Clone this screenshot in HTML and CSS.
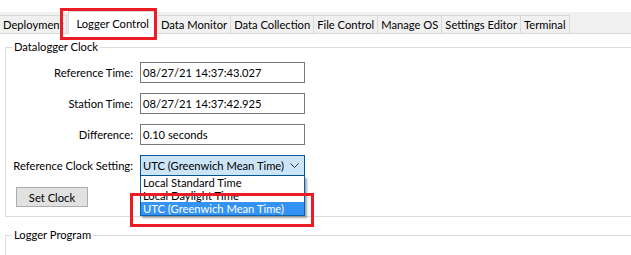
FILE: index.html
```html
<!DOCTYPE html>
<html lang="en">

<head>
    <meta charset="UTF-8">
    <title>Logger Control</title>
    <link rel="stylesheet" href="styles.css">
</head>

<body>

    <div class="top-space"></div>
    <div class="tab-bar">
        <div class="tab">Deployment</div>
        <div class="tab active">Logger Control</div>
        <div class="tab">Data Monitor</div>
        <div class="tab">Data Collection</div>
        <div class="tab">File Control</div>
        <div class="tab">Manage OS</div>
        <div class="tab">Settings Editor</div>
        <div class="tab">Terminal</div>
    </div>

    <div class="tab-page">
        <fieldset class="group clock-group">
            <legend>Datalogger Clock</legend>
            <div class="form-grid">
                <label>Reference Time:</label>
                <div class="text-box">08/27/21 14:37:43.027</div>

                <label>Station Time:</label>
                <div class="text-box">08/27/21 14:37:42.925</div>

                <label>Difference:</label>
                <div class="text-box">0.10 seconds</div>

                <label>Reference Clock Setting:</label>
                <div class="combo-wrap">
                    <div class="combo">
                        <span class="combo-text">UTC (Greenwich Mean Time)</span>
                        <svg class="chevron" width="9" height="5" viewBox="0 0 9 5">
                            <path d="M0.5 0.5 L4.5 4.5 L8.5 0.5" fill="none" stroke="#333" stroke-width="1" />
                        </svg>
                    </div>
                    <ul class="combo-list">
                        <li>Local Standard Time</li>
                        <li>Local Daylight Time</li>
                        <li class="selected">UTC (Greenwich Mean Time)</li>
                    </ul>
                </div>
            </div>
            <button class="set-btn">Set Clock</button>
        </fieldset>

        <fieldset class="group program-group">
            <legend>Logger Program</legend>
        </fieldset>
    </div>

    <!-- annotation boxes from the screenshot -->
    <div class="mark mark-tab"></div>
    <div class="mark mark-option"></div>

</body>

</html>
```

FILE: styles.css
```css
body {
    margin: 0;
    padding: 0;
    width: 631px;
    height: 255px;
    overflow: hidden;
    position: relative;
    background-color: #ffffff;
    color: #000000;
    font-family: Lato, "Liberation Sans", sans-serif;
    font-size: 11.2px;
}

.top-space {
    height: 12px;
}

.tab-bar {
    display: flex;
    align-items: flex-end;
    height: 22px;
    background-color: #f0f0f0;
    border-bottom: 1px solid #d9d9d9;
    box-sizing: border-box;
}

.tab {
    height: 18px;
    line-height: 18px;
    padding: 0 3px;
    border: 1px solid #d9d9d9;
    border-bottom: none;
    border-left: none;
    box-sizing: border-box;
    background-color: #f0f0f0;
    white-space: nowrap;
}

.tab:first-child {
    padding-left: 3px;
}

.tab.active {
    height: 23px;
    margin: 0 1px -1px 1px;
    padding: 0 7px;
    line-height: 23px;
    background-color: #ffffff;
    border-left: 1px solid #d9d9d9;
}

.tab-page {
    padding-top: 6px;
}

.group {
    margin: 0 -20px 0 5px;
    border: 1px solid #dcdcdc;
    padding: 0 6px;
}

.group legend {
    padding: 0 2px;
    line-height: 14px;
}

.clock-group {
    padding-top: 8px;
    padding-bottom: 9px;
}

.form-grid {
    display: grid;
    grid-template-columns: 121px 165px;
    column-gap: 7px;
    row-gap: 10px;
    align-items: center;
}

.form-grid label {
    text-align: right;
    white-space: nowrap;
}

.text-box {
    height: 21px;
    line-height: 19px;
    border: 1px solid #7a7a7a;
    box-sizing: border-box;
    padding-left: 2px;
    white-space: nowrap;
}

.combo-wrap {
    position: relative;
}

.combo {
    height: 21px;
    border: 1px solid #005499;
    box-sizing: border-box;
    background-color: #cce4f7;
    padding: 0 0 0 2px;
    display: flex;
    align-items: center;
    justify-content: space-between;
}

.combo-text {
    white-space: nowrap;
    overflow: hidden;
}

.chevron {
    flex-shrink: 0;
    margin-right: 5px;
}

.combo-list {
    position: absolute;
    top: 100%;
    left: 0;
    width: 100%;
    box-sizing: border-box;
    margin: 0;
    padding: 0;
    list-style: none;
    background-color: #ffffff;
    border: 1px solid #0063b1;
    border-top: none;
    box-shadow: 2px 2px 2px rgba(0, 0, 0, 0.35);
    z-index: 2;
}

.combo-list li {
    height: 13px;
    line-height: 13px;
    padding-left: 2px;
    white-space: nowrap;
}

.combo-list li.selected {
    background-color: #3393f5;
    color: #ffffff;
}

.set-btn {
    display: block;
    margin: 11px 0 0 4px;
    width: 72px;
    height: 20px;
    padding: 0;
    font-family: inherit;
    font-size: inherit;
    color: #000000;
    background-color: #e1e1e1;
    border: 1px solid #adadad;
}

.program-group {
    margin-top: 11px;
    height: 40px;
}

.mark {
    position: absolute;
    border: 3px solid #ec1c24;
    box-sizing: border-box;
    z-index: 3;
}

.mark-tab {
    left: 60px;
    top: 8px;
    width: 97px;
    height: 32px;
}

.mark-option {
    left: 130px;
    top: 193px;
    width: 184px;
    height: 34px;
}
```
